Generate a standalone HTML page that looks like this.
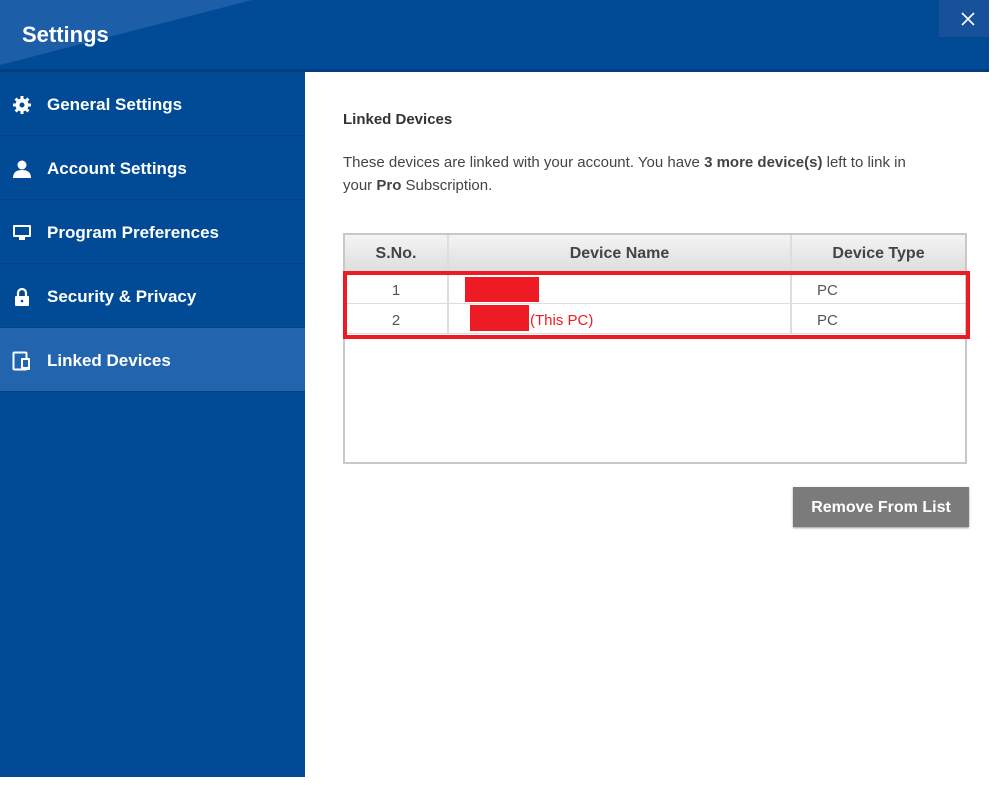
<!DOCTYPE html>
<html><head><style>
*{margin:0;padding:0;box-sizing:border-box}
body{width:998px;height:785px;background:#fff;font-family:"Liberation Sans",sans-serif;position:relative;overflow:hidden}
.hdr{position:absolute;left:0;top:0;width:989px;height:72px;background:#014b96;border-bottom:3px solid #013e80}
.side{position:absolute;left:0;top:72px;width:305px;height:705px;background:#014b96}
.item{height:64px;border-bottom:1px solid #0a3f7e;color:#fff;font-weight:bold;font-size:17px;display:flex;align-items:center;padding-left:47px;padding-top:3px;position:relative}
.item svg{position:absolute;left:12px;top:23px}
.item.act{background:#2364ae}
.main{position:absolute;left:305px;top:72px;width:684px;height:705px;background:#fff}
</style></head><body>
<div class="hdr">
<svg width="260" height="70" style="position:absolute;left:0;top:0"><polygon points="0,0 252,0 0,65" fill="#1d5ea9"/></svg>
<div style="position:absolute;left:22px;top:22px;color:#fff;font-size:22px;font-weight:bold">Settings</div>
<div style="position:absolute;left:939px;top:0;width:50px;height:37px;background:#16519a"></div>
<svg width="14" height="14" style="position:absolute;left:961px;top:12px"><path d="M1 1L13 13M13 1L1 13" stroke="#fff" stroke-width="1.6"/></svg>
</div>
<div class="side">
<div class="item"><svg width="20" height="20" viewBox="0 0 20 20"><circle cx="10" cy="10" r="6.5" fill="#fff"/><g stroke="#fff" stroke-width="3"><path d="M10 1v18M1 10h18M3.6 3.6l12.8 12.8M16.4 3.6L3.6 16.4"/></g><circle cx="10" cy="10" r="2.5" fill="#014b96"/></svg>General Settings</div>
<div class="item"><svg width="20" height="20" viewBox="0 0 20 20"><circle cx="10" cy="6" r="4.5" fill="#fff"/><path d="M1 19Q1 11 10 11Q19 11 19 19Z" fill="#fff"/></svg>Account Settings</div>
<div class="item"><svg width="20" height="20" viewBox="0 0 20 20"><rect x="1" y="2" width="18" height="12" rx="1" fill="#fff"/><rect x="3" y="4" width="14" height="8" fill="#014b96"/><rect x="7" y="14" width="6" height="3" fill="#fff"/></svg>Program Preferences</div>
<div class="item"><svg width="20" height="20" viewBox="0 0 20 20"><path d="M6 9V6a4 4 0 0 1 8 0v3" stroke="#fff" stroke-width="2.2" fill="none"/><rect x="3" y="9" width="14" height="10" rx="1" fill="#fff"/><circle cx="10" cy="14" r="1.3" fill="#014b96"/></svg>Security &amp; Privacy</div>
<div class="item act"><svg width="20" height="20" viewBox="0 0 20 20"><rect x="1.5" y="1.5" width="13" height="17" rx="1" stroke="#fff" stroke-width="2" fill="none"/><rect x="9" y="7" width="9" height="12" rx="1" fill="#fff"/><rect x="11" y="9" width="5" height="7" fill="#2364ae"/></svg>Linked Devices</div>
</div>
<div class="main"></div>
<div style="position:absolute;left:343px;top:111px;font-size:15px;font-weight:bold;color:#333">Linked Devices</div>
<div style="position:absolute;left:343px;top:151px;width:620px;font-size:15px;line-height:23px;color:#444">These devices are linked with your account. You have <b>3 more device(s)</b> left to link in<br>your <b>Pro</b> Subscription.</div>
<div style="position:absolute;left:343px;top:233px;width:624px;height:231px;border:2px solid #c8c8c8;background:#fff"></div>
<div style="position:absolute;left:345px;top:235px;width:620px;height:36px;background:linear-gradient(#f4f4f4,#dedede)"></div>
<div style="position:absolute;left:447px;top:235px;width:2px;height:99px;background:#ddd"></div>
<div style="position:absolute;left:790px;top:235px;width:2px;height:99px;background:#ddd"></div>
<div style="position:absolute;left:345px;top:303px;width:620px;height:1px;background:#ddd"></div>
<div style="position:absolute;left:345px;top:333px;width:620px;height:1px;background:#ddd"></div>
<div style="position:absolute;left:345px;top:245px;width:102px;text-align:center;font-weight:bold;font-size:16px;color:#444">S.No.</div>
<div style="position:absolute;left:449px;top:245px;width:341px;text-align:center;font-weight:bold;font-size:16px;color:#444">Device Name</div>
<div style="position:absolute;left:792px;top:245px;width:173px;text-align:center;font-weight:bold;font-size:16px;color:#444">Device Type</div>
<div style="position:absolute;left:345px;top:282px;width:102px;text-align:center;font-size:15px;color:#555">1</div>
<div style="position:absolute;left:345px;top:312px;width:102px;text-align:center;font-size:15px;color:#555">2</div>
<div style="position:absolute;left:817px;top:282px;font-size:15px;color:#555">PC</div>
<div style="position:absolute;left:817px;top:312px;font-size:15px;color:#555">PC</div>
<div style="position:absolute;left:465px;top:277px;width:74px;height:25px;background:#ed1c24"></div>
<div style="position:absolute;left:470px;top:305px;width:59px;height:26px;background:#ed1c24"></div>
<div style="position:absolute;left:530px;top:312px;font-size:15px;color:#ed1c24">(This PC)</div>
<div style="position:absolute;left:343px;top:271px;width:627px;height:68px;border:4px solid #ed1c24"></div>
<div style="position:absolute;left:793px;top:487px;width:176px;height:40px;background:#7b7b7b;color:#fff;font-weight:bold;font-size:16px;text-align:center;line-height:41px;box-shadow:0 1px 2px #999">Remove From List</div>
</body></html>
